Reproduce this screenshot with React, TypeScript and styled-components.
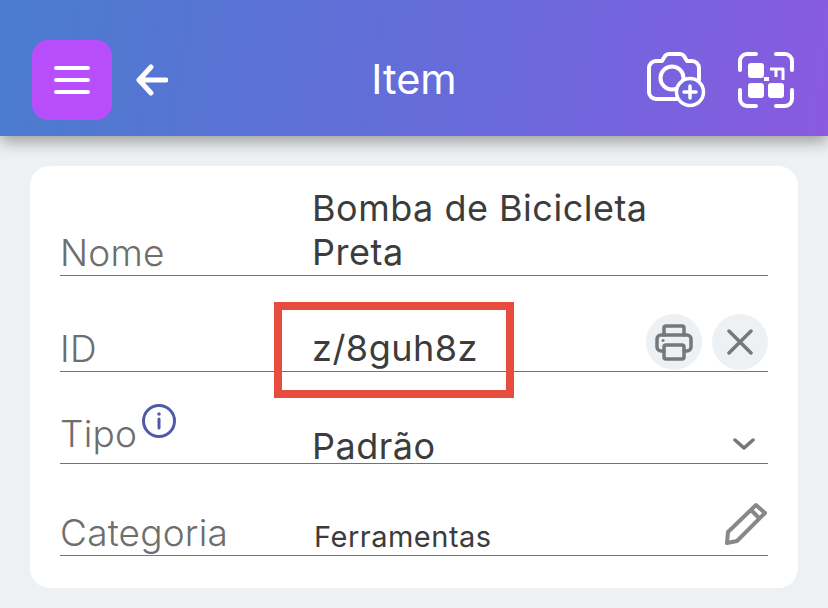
import styled, { createGlobalStyle } from "styled-components";

const GlobalStyle = createGlobalStyle`
  html, body {
    margin: 0;
    padding: 0;
    background: #eef1f3;
    font-family: Inter, Roboto, "Liberation Sans", sans-serif;
  }
`;

const Page = styled.div`
  width: 828px;
  height: 608px;
  overflow: hidden;
  display: flex;
  flex-direction: column;
  background: #eef1f3;
`;

const Header = styled.header`
  height: 136px;
  flex: none;
  box-sizing: border-box;
  display: grid;
  grid-template-columns: 1fr auto 1fr;
  align-items: center;
  padding: 24px 32px 0;
  background: linear-gradient(100deg, #4a7cce 0%, #6b69dc 62%, #8a5ae0 100%);
  box-shadow: 0 6px 14px rgba(60, 60, 60, 0.45);
  position: relative;
`;

const HeaderLeft = styled.div`
  display: flex;
  align-items: center;
  gap: 24px;
`;

const HeaderRight = styled.div`
  display: flex;
  align-items: center;
  justify-content: flex-end;
  gap: 31px;
  padding-right: 2px;
`;

const MenuButton = styled.button`
  width: 80px;
  height: 80px;
  border: none;
  border-radius: 16px;
  background: #b84dfb;
  display: flex;
  align-items: center;
  justify-content: center;
  padding: 0;
`;

const Title = styled.h1`
  margin: 0;
  color: #fff;
  font-size: 41.5px;
  font-weight: 400;
  line-height: 1;
`;

const Card = styled.section`
  margin: 30px 30px 20px;
  padding: 20px 30px 0;
  height: 422px;
  box-sizing: border-box;
  background: #fff;
  border-radius: 20px;
  position: relative;
`;

const Row = styled.div<{ $height: number }>`
  height: ${(props) => props.$height}px;
  box-sizing: border-box;
  border-bottom: 1px solid #6b7280;
  display: grid;
  grid-template-columns: 253px 1fr auto;
  align-items: end;
`;

const Label = styled.label<{ $raised?: boolean }>`
  display: flex;
  align-items: flex-start;
  gap: 4px;
  padding-bottom: ${(props) => (props.$raised ? 8 : 1)}px;
  color: #6e6e6e;
  font-size: 37px;
  font-weight: 300;
  letter-spacing: 0.2px;
  line-height: 42px;
`;

const Value = styled.div<{ $small?: boolean; $low?: boolean }>`
  margin-left: -1px;
  margin-bottom: ${(props) => (props.$small || props.$low ? 0 : 1)}px;
  color: #3c3c3c;
  font-size: ${(props) => (props.$small ? 29 : 36)}px;
  font-weight: 400;
  letter-spacing: 0.5px;
  line-height: ${(props) => (props.$small ? 36 : props.$low ? 34 : 44)}px;
  padding-left: ${(props) => (props.$small ? 2 : 0)}px;
`;

const Actions = styled.div`
  display: flex;
  align-items: center;
  gap: 10px;
  align-self: end;
  margin-bottom: 1px;
`;

const RoundButton = styled.button`
  width: 56px;
  height: 56px;
  border: none;
  border-radius: 50%;
  background: #eef1f3;
  display: flex;
  align-items: center;
  justify-content: center;
  padding: 0;
`;

const InfoIcon = styled.svg`
  margin-top: -10px;
`;

const ChevronIcon = styled.svg`
  margin: 0 13px 13px 0;
`;

const PencilIcon = styled.svg`
  margin-bottom: 9px;
`;

const Highlight = styled.div`
  position: absolute;
  left: 244px;
  top: 136px;
  width: 240px;
  height: 96px;
  box-sizing: border-box;
  border: 8px solid #e74c3c;
`;

const App = () => {
  return (
    <>
      <GlobalStyle />
      <Page>
        <Header>
          <HeaderLeft>
            <MenuButton aria-label="Menu">
              <svg width="36" height="28" viewBox="0 0 36 28" fill="none" stroke="#fff" strokeWidth="4" strokeLinecap="round">
                <path d="M2 2h32M2 14h32M2 26h32" />
              </svg>
            </MenuButton>
            <svg width="32" height="32" viewBox="0 0 32 32" fill="none" stroke="#fff" strokeWidth="5" strokeLinecap="round" strokeLinejoin="round">
              <path d="M30 16H3M15 3 3 16l12 13" />
            </svg>
          </HeaderLeft>
          <Title>Item</Title>
          <HeaderRight>
            <svg width="60" height="58" viewBox="0 0 60 58" fill="none" stroke="#fff" strokeWidth="4" strokeLinecap="round" strokeLinejoin="round">
              <path d="M30 48H9a7 7 0 0 1-7-7V17a7 7 0 0 1 7-7h6l3-5a5 5 0 0 1 4-2h11a5 5 0 0 1 4 2l3 5h5a7 7 0 0 1 7 7v12" />
              <circle cx="25" cy="27" r="11.500" />
              <circle cx="43" cy="41" r="13.500" strokeWidth="3.500" fill="#7165df" />
              <path d="M43 35v12M37 41h12" strokeWidth="3.500" />
            </svg>
            <svg width="56" height="56" viewBox="0 0 56 56" fill="none" stroke="#fff" strokeWidth="4" strokeLinecap="round" strokeLinejoin="round">
              <path d="M2 18V9a7 7 0 0 1 7-7h9M38 2h9a7 7 0 0 1 7 7v9M54 38v9a7 7 0 0 1-7 7h-9M18 54H9a7 7 0 0 1-7-7v-9" />
              <rect x="10" y="11" width="16" height="15" rx="3" fill="#fff" stroke="none" />
              <rect x="10" y="31" width="16" height="15" rx="3" fill="#fff" stroke="none" />
              <rect x="30" y="31" width="16" height="15" rx="3" fill="#fff" stroke="none" />
              <path d="M32 17h13v11" strokeWidth="3" strokeLinecap="butt" />
              <path d="M38 17v8" strokeWidth="3" strokeLinecap="butt" />
              <rect x="26" y="25" width="5" height="4" fill="#fff" stroke="none" />
            </svg>
          </HeaderRight>
        </Header>
        <Card>
          <Row $height={90}>
            <Label>Nome</Label>
            <Value>Bomba de Bicicleta<br />Preta</Value>
          </Row>
          <Row $height={96}>
            <Label>ID</Label>
            <Value>z/8guh8z</Value>
            <Actions>
              <RoundButton aria-label="Imprimir">
                <svg width="38" height="38" viewBox="0 0 38 38" fill="none" stroke="#777" strokeWidth="3.500" strokeLinejoin="round" strokeLinecap="round">
                  <path d="M9 12V5a2 2 0 0 1 2-2h16a2 2 0 0 1 2 2v7" />
                  <path d="M9 28H6a4 4 0 0 1-4-4V16a4 4 0 0 1 4-4h26a4 4 0 0 1 4 4v8a4 4 0 0 1-4 4h-3" />
                  <rect x="9" y="22" width="20" height="14" rx="2" />
                  <circle cx="8" cy="17.500" r="1" fill="#777" strokeWidth="1" />
                </svg>
              </RoundButton>
              <RoundButton aria-label="Limpar">
                <svg width="26" height="26" viewBox="0 0 26 26" fill="none" stroke="#777" strokeWidth="3.500" strokeLinecap="round">
                  <path d="M2 2l22 22M24 2 2 24" />
                </svg>
              </RoundButton>
            </Actions>
          </Row>
          <Row $height={92}>
            <Label $raised>
              Tipo
              <InfoIcon width="36" height="36" viewBox="0 0 36 36" fill="none" stroke="#4f5ba8" strokeWidth="3">
                <circle cx="18" cy="18" r="15.500" />
                <path d="M18 16v9" strokeLinecap="round" />
                <circle cx="18" cy="11" r="1" fill="#4f5ba8" strokeWidth="1.500" />
              </InfoIcon>
            </Label>
            <Value $low>Padrão</Value>
            <ChevronIcon width="22" height="12" viewBox="0 0 22 12" fill="none" stroke="#777" strokeWidth="3.500" strokeLinecap="round" strokeLinejoin="round">
              <path d="M2 2l9 8 9-8" />
            </ChevronIcon>
          </Row>
          <Row $height={92}>
            <Label>Categoria</Label>
            <Value $small>Ferramentas</Value>
            <PencilIcon width="44" height="44" viewBox="0 0 44 44" fill="none" stroke="#888" strokeWidth="4" strokeLinejoin="round">
              <path d="M32 3l9 8-28 28-10 2 1-11z" />
              <path d="M27 8l9 9" />
            </PencilIcon>
          </Row>
          <Highlight />
        </Card>
      </Page>
    </>
  );
};

export default App;
